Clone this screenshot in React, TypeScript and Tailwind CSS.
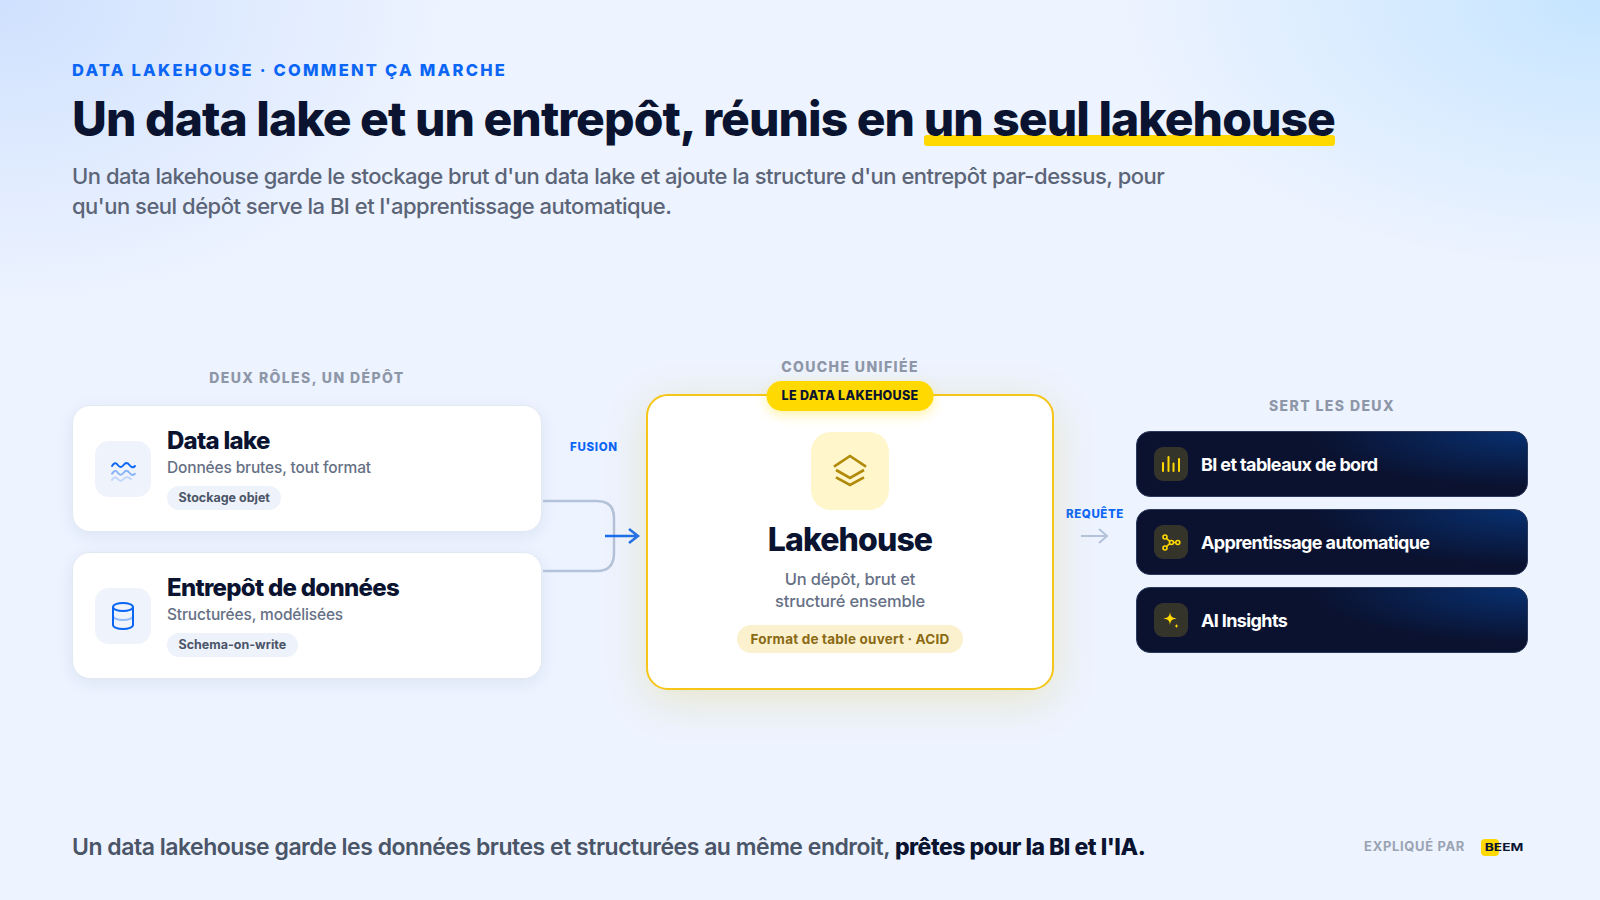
const FONT = "font-['Inter','Noto_Sans',sans-serif]"

function WaveIcon() {
  return (
    <svg width="28" height="28" viewBox="0 0 28 28" fill="none" stroke="#0b66f5" strokeWidth="1.900" strokeLinecap="round">
      <path d="M3 11Q5.900 6 8.800 10T14.600 10 20.400 10 26 11" />
      <path d="M3 18.700Q5.900 13.700 8.800 17.700T14.600 17.700 20.400 17.700 26 18.700" opacity="0.45" />
      <path d="M3 25Q5.900 20.500 8.800 24T14.600 24 22 24" opacity="0.2" />
    </svg>
  )
}

function DbIcon() {
  return (
    <svg width="28" height="32" viewBox="0 0 28 32" fill="none" stroke="#0b66f5" strokeWidth="2">
      <ellipse cx="14" cy="7" rx="10" ry="4" />
      <path d="M4 7v18c0 2.200 4.500 4 10 4s10-1.800 10-4V7" />
      <path d="M4 16c0 2.200 4.500 4 10 4s10-1.800 10-4" opacity="0.4" />
    </svg>
  )
}

function LayersIcon() {
  return (
    <svg width="36" height="34" viewBox="0 0 36 34" fill="none" stroke="#b08a08" strokeWidth="2.600">
      <path d="M2 12.700 18 2 34 12.700" />
      <path d="M4 16 18 24 32 16" />
      <path d="M4 23.400 18 31 32 23.400" />
    </svg>
  )
}

function BarsIcon() {
  return (
    <svg width="20" height="18" viewBox="0 0 20 18" fill="none" stroke="#ffd900" strokeWidth="2" strokeLinecap="round">
      <path d="M2 8v8M7.500 2v14M12.500 8.500v7.500M18 4v12" />
    </svg>
  )
}

function NodesIcon() {
  return (
    <svg width="19" height="17" viewBox="0 0 19 17" fill="none" stroke="#ffd900" strokeWidth="1.600">
      <circle cx="3" cy="3" r="2" />
      <circle cx="3" cy="14" r="2" />
      <circle cx="9.500" cy="8.500" r="2" />
      <circle cx="15.800" cy="8.500" r="2" />
      <path d="M4.500 4.500 7.800 7.300M4.500 12.500 7.800 9.700M11.500 8.500H13.800" />
    </svg>
  )
}

function SparkIcon() {
  return (
    <svg width="20" height="20" viewBox="0 0 20 20" fill="#ffd900">
      <path d="M9 2C9.600 6.500 10.500 7.500 15.500 8.500 10.500 9.500 9.600 10.500 9 15 8.400 10.500 7.500 9.500 2.500 8.500 7.500 7.500 8.400 6.500 9 2Z" />
      <path d="M15.500 13.500C15.700 15.200 16 15.600 17.900 16 16 16.400 15.700 16.800 15.500 18.500 15.300 16.800 15 16.400 13.100 16 15 15.600 15.300 15.200 15.500 13.500Z" />
    </svg>
  )
}

function SectionLabel({ children }: { children: string }) {
  return (
    <div className="text-center text-[14px] leading-[18px] font-extrabold tracking-[0.1em] text-[#8e97a8]">
      {children}
    </div>
  )
}

function SourceCard({ icon, title, sub, tag }: { icon: React.ReactNode; title: string; sub: string; tag: string }) {
  return (
    <div className="flex h-[127px] items-center gap-4 rounded-[18px] border border-[#e3e9f3] bg-white px-[22px] shadow-[0_4px_16px_rgba(30,60,120,0.08)]">
      <div className="flex h-[56px] w-[56px] items-center justify-center rounded-[14px] bg-[#eef3fc]">{icon}</div>
      <div className="flex flex-col items-start pb-[2px]">
        <div className="text-[24px] leading-[30px] font-extrabold tracking-[-0.03em] text-[#0a1330]">{title}</div>
        <div className="mt-[2px] text-[15.500px] leading-[20px] font-medium tracking-[-0.01em] text-[#667085]">{sub}</div>
        <div className="mt-[8px] rounded-full bg-[#eef3fb] px-[11.500px] text-[12.500px] leading-[24px] font-bold text-[#4b5568]">{tag}</div>
      </div>
    </div>
  )
}

function UseRow({ icon, label }: { icon: React.ReactNode; label: string }) {
  return (
    <div className="flex h-[66px] items-center gap-[13px] rounded-[14px] border border-[#2b3a5c] bg-[#0a1230] bg-[radial-gradient(ellipse_55%_85%_at_100%_0%,#083070_0%,rgba(8,48,112,0)_100%)] pl-[17px]">
      <div className="flex h-[34px] w-[34px] items-center justify-center rounded-[9px] bg-[#35342a]">{icon}</div>
      <div className="text-[18px] font-bold tracking-[-0.035em] text-white">{label}</div>
    </div>
  )
}

export default function App() {
  return (
    <div className={`${FONT} flex h-[900px] w-[1600px] flex-col overflow-hidden bg-[#edf3ff] bg-[radial-gradient(ellipse_28%_34%_at_0%_0%,#cfe1fe_0%,rgba(207,225,254,0)_100%),radial-gradient(ellipse_30%_30%_at_100%_0%,#c6e5ff_0%,rgba(198,229,255,0)_100%)] px-[72px] pt-[60px] pb-[37px]`}>
      <header>
        <div className="text-[16.500px] leading-[20px] font-extrabold tracking-[0.135em] text-[#0b66f5]">
          DATA LAKEHOUSE · COMMENT ÇA MARCHE
        </div>
        <h1 className="mt-[9px] text-[48px] leading-[60px] font-extrabold tracking-[-0.02em] text-[#0a1330]">
          Un data lake et un entrepôt, réunis en{' '}
          <span className="relative isolate inline-block">
            <span className="absolute right-0 bottom-[3px] left-0 -z-10 h-[11px] rounded-[3px] bg-[#ffd900]" />
            un seul lakehouse
          </span>
        </h1>
        <p className="mt-[13px] max-w-[1110px] text-[22px] leading-[29.500px] font-medium tracking-[-0.0225em] text-[#5b6577]">
          Un data lakehouse garde le stockage brut d'un data lake et ajoute la structure d'un entrepôt par-dessus, pour qu'un seul dépôt serve la BI et l'apprentissage automatique.
        </p>
      </header>

      <main className="flex flex-1 items-center pb-[4px]">
        <div className="flex w-[470px] flex-col gap-[20px]">
          <div className="-mb-[2px]"><SectionLabel>DEUX RÔLES, UN DÉPÔT</SectionLabel></div>
          <SourceCard icon={<WaveIcon />} title="Data lake" sub="Données brutes, tout format" tag="Stockage objet" />
          <SourceCard icon={<DbIcon />} title="Entrepôt de données" sub="Structurées, modélisées" tag="Schema-on-write" />
        </div>

        <div className="mb-[22px] flex w-[104px] flex-col">
          <div className="mb-[33px] pl-[28px] text-[11.500px] leading-[14px] font-extrabold tracking-[0.06em] text-[#0b66f5]">FUSION</div>
          <svg width="104" height="100" viewBox="0 0 104 100" fill="none">
            <path d="M1 14H55Q72 14 72 31V66Q72 84 55 84H1" stroke="#b4c2da" strokeWidth="2.500" />
            <path d="M63 49H96M87 42 96 49 87 56" stroke="#1a6cf0" strokeWidth="2.500" />
          </svg>
        </div>

        <div className="flex w-[408px] flex-col gap-[18px]">
          <SectionLabel>COUCHE UNIFIÉE</SectionLabel>
          <div className="relative flex h-[296px] flex-col items-center rounded-[22px] border-2 border-[#f5c518] bg-white pt-[36px] shadow-[0_10px_40px_rgba(220,190,30,0.24)]">
            <div className="absolute -top-[15px] left-1/2 -translate-x-1/2 rounded-full bg-[#ffd900] px-[15px] text-[12.500px] leading-[30px] font-extrabold tracking-[0.025em] whitespace-nowrap text-[#0a1330] shadow-[0_4px_12px_rgba(255,217,0,0.35)]">
              LE DATA LAKEHOUSE
            </div>
            <div className="flex h-[78px] w-[78px] items-center justify-center rounded-[20px] bg-[#fff6cc]"><LayersIcon /></div>
            <div className="mt-[10px] text-[32px] leading-[40px] font-extrabold tracking-[-0.028em] text-[#0a1330]">Lakehouse</div>
            <div className="mt-[9px] text-center text-[16.500px] leading-[21.500px] font-medium tracking-[-0.01em] text-[#667085]">
              Un dépôt, brut et<br />structuré ensemble
            </div>
            <div className="mt-[13px] rounded-full bg-[#fbf1cf] px-[14px] text-[13.500px] leading-[28px] font-bold tracking-[0.015em] text-[#8a6a14]">
              Format de table ouvert · ACID
            </div>
          </div>
        </div>

        <div className="mt-[4px] flex w-[82px] flex-col items-center">
          <div className="text-[11.500px] leading-[14px] font-extrabold tracking-[0.05em] text-[#0b66f5]">REQUÊTE</div>
          <svg className="mt-[5px] mr-[2px]" width="30" height="20" viewBox="0 0 30 20" fill="none" stroke="#b4c2da" strokeWidth="2">
            <path d="M2 10H28M20 3 28 10 20 17" />
          </svg>
        </div>

        <div className="mt-[2px] flex w-[392px] flex-col gap-[12px]">
          <div className="mb-[4px]"><SectionLabel>SERT LES DEUX</SectionLabel></div>
          <UseRow icon={<BarsIcon />} label="BI et tableaux de bord" />
          <UseRow icon={<NodesIcon />} label="Apprentissage automatique" />
          <UseRow icon={<SparkIcon />} label="AI Insights" />
        </div>
      </main>

      <footer className="flex items-center justify-between">
        <div className="text-[23px] leading-[32px] font-semibold tracking-[-0.021em] text-[#4a5568]">
          Un data lakehouse garde les données brutes et structurées au même endroit, <span className="font-extrabold text-[#0a1330]">prêtes pour la BI et l'IA.</span>
        </div>
        <div className="flex items-center gap-4 pr-[4px]">
          <span className="text-[13px] font-bold tracking-[0.05em] text-[#9aa3b2]">EXPLIQUÉ PAR</span>
          <div className="relative h-[17px] w-[43px]">
            <div className="absolute top-0 left-0 h-[17px] w-[18px] rounded-[4px] bg-[#ffd900]" />
            <div className="relative origin-left scale-x-[1.25] pl-[3px] text-[11px] leading-[17px] font-bold text-[#0a1330]">BEEM</div>
          </div>
        </div>
      </footer>
    </div>
  )
}
